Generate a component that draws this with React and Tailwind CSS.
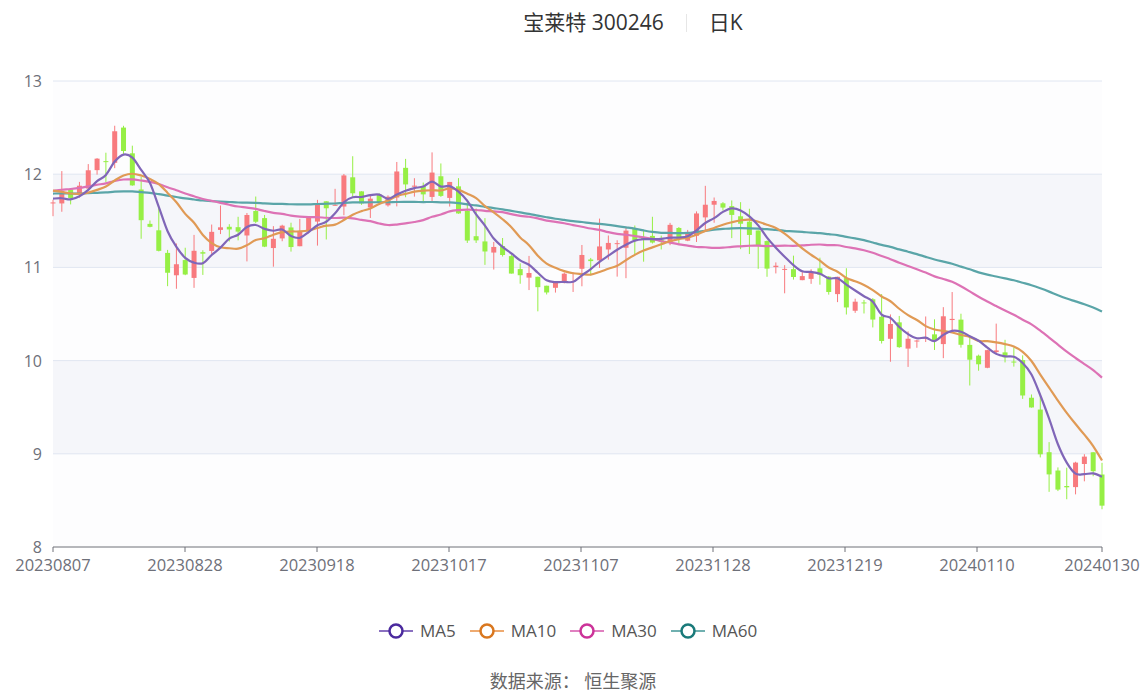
import React from "react";

const X0 = 53, X1 = 1102, N = 120;
const STEP = (X1 - X0) / (N - 1);
const yOf = (p) => 81 + (13 - p) * 93.2;
const keys = [[53,11.7],[75,11.9],[100,12.2],[115,12.35],[125,12.2],[140,11.6],[160,11.1],[185,11.0],[210,11.35],[235,11.55],[255,11.35],[290,11.3],[320,11.65],[345,11.85],[375,11.7],[395,11.95],[430,11.9],[450,11.8],[470,11.3],[500,11.1],[520,11.0],[550,10.85],[575,10.9],[600,11.25],[630,11.3],[660,11.35],[690,11.45],[710,11.6],[740,11.4],[770,11.1],[800,10.95],[830,10.8],[860,10.65],[880,10.35],[905,10.1],[925,10.25],[945,10.4],[960,10.25],[980,10.05],[1000,10.05],[1020,9.8],[1040,9.1],[1060,8.7],[1080,8.95],[1102,8.55]];
function interp(x){for(let i=0;i<keys.length-1;i++){const[a,p]=keys[i],[b,q]=keys[i+1];if(x>=a&&x<=b)return p+(q-p)*(x-a)/(b-a);}return keys[keys.length-1][1];}
let seed=7;const rnd=()=>{seed=(seed*9301+49297)%233280;return seed/233280;};
const closes=[];for(let i=0;i<N;i++){closes.push(interp(X0+i*STEP)+(rnd()-0.5)*0.3);}
const hist=[];for(let i=0;i<60;i++)hist.push(11.75+0.25*Math.sin(i/6)+(rnd()-0.5)*0.15);
const all=[...hist,...closes];
const candles=closes.map((c,i)=>{const o=all[60+i-1]+(rnd()-0.5)*0.1;const hi=Math.max(o,c)+rnd()*rnd()*0.4;const lo=Math.min(o,c)-rnd()*rnd()*0.4;return{o,c,hi,lo};});
function ma(n){return closes.map((_,i)=>{let s=0;for(let k=0;k<n;k++)s+=all[60+i-k];return s/n;});}
function path(vals){const pts=vals.map((v,i)=>[X0+i*STEP,yOf(v)]);let d=`M${pts[0][0]},${pts[0][1]}`;for(let i=0;i<pts.length-1;i++){const p0=pts[Math.max(0,i-1)],p1=pts[i],p2=pts[i+1],p3=pts[Math.min(pts.length-1,i+2)];const c1=[p1[0]+(p2[0]-p0[0])/6,p1[1]+(p2[1]-p0[1])/6],c2=[p2[0]-(p3[0]-p1[0])/6,p2[1]-(p3[1]-p1[1])/6];d+=`C${c1[0]},${c1[1]} ${c2[0]},${c2[1]} ${p2[0]},${p2[1]}`;}return d;}
const lines=[[ma(60),"#5aa5a8"],[ma(30),"#dd72b5"],[ma(10),"#e09a55"],[ma(5),"#8066b8"]];
const xl=[["20230807",53],["20230828",185],["20230918",317],["20231017",449],["20231107",581],["20231128",713],["20231219",845],["20240110",977],["20240130",1102]];
const legend=[["MA5","#4b2a9e","#8a70c0"],["MA10","#d9771f","#eeaa70"],["MA30","#cc3399","#e080c0"],["MA60","#1a7a7a","#70b0b0"]];

export default function App(){
  return(
    <div className="w-[1148px] h-[699px] bg-white relative" style={{fontFamily:'"Open Sans","Noto Sans CJK SC",sans-serif'}}>
      <div className="flex items-center justify-center h-[46px] pl-[118px] text-[21px] text-[#333]">
        <span>宝莱特 300246</span>
        <span className="mx-[22px] w-px h-[18px] bg-[#e6e6e6]"></span>
        <span>日K</span>
      </div>
      <svg width="1148" height="560" viewBox="0 46 1148 560" className="block">
        {[13,12,11,10,9].map((p,i)=>(<rect key={p} x={X0} y={yOf(p)} width={X1-X0} height={93.2} fill={i%2?"#f5f6fa":"#fdfdfe"}/>))}
        {[13,12,11,10,9].map(p=>(<line key={p} x1={X0} x2={X1} y1={yOf(p)} y2={yOf(p)} stroke="#e0e6f1"/>))}
        {[13,12,11,10,9,8].map(p=>(<text key={p} x={42} y={yOf(p)+6} textAnchor="end" fontSize="16" fill="#6e7079">{p}</text>))}
        <line x1={X0} x2={X1} y1={547} y2={547} stroke="#6e7079"/>
        {xl.map(([t,x])=>(<g key={t}><line x1={x} x2={x} y1={547} y2={552} stroke="#6e7079"/><text x={x} y={571} textAnchor="middle" fontSize="16.5" fill="#6e7079">{t}</text></g>))}
        {candles.map((k,i)=>{const x=X0+i*STEP;const up=k.c>=k.o;const col=up?"#f87a7e":"#96ef45";const t=yOf(Math.max(k.o,k.c)),b=yOf(Math.min(k.o,k.c));return(<g key={i}><line x1={x} x2={x} y1={yOf(k.hi)} y2={yOf(k.lo)} stroke={col}/><rect x={x-2.5} y={t} width={5} height={Math.max(1,b-t)} fill={col}/></g>);})}
        {lines.map(([v,c],i)=>(<path key={i} d={path(v)} fill="none" stroke={c} strokeWidth="2.2"/>))}
      </svg>
      <div className="flex justify-center gap-[14px] mt-[12px] pr-[12px] text-[17px] text-[#555]">
        {legend.map(([n,c,l])=>(<div key={n} className="flex items-center gap-[7px]">
          <svg width="34" height="16"><line x1="0" x2="34" y1="8" y2="8" stroke={l} strokeWidth="2"/><circle cx="17" cy="8" r="6.5" fill="white" stroke={c} strokeWidth="2.5"/></svg>
          <span>{n}</span></div>))}
      </div>
      <div className="text-center mt-[24px] pr-[2px] text-[18px] text-[#666]">数据来源：&nbsp;恒生聚源</div>
    </div>
  );
}
